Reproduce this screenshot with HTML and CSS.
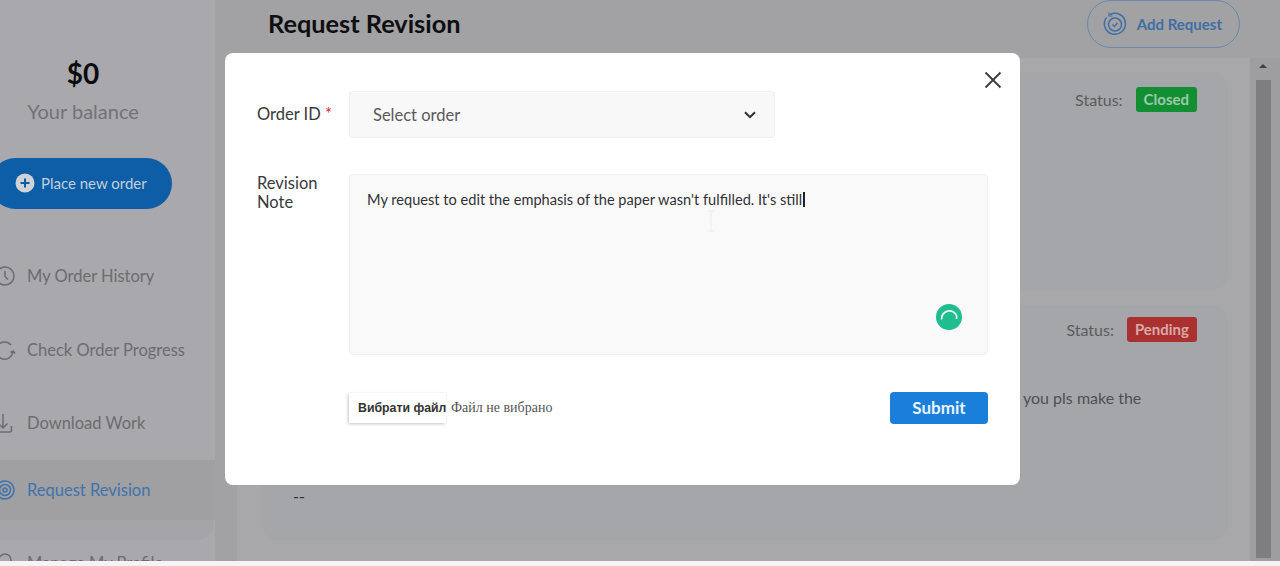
FILE: index.html
```html
<!DOCTYPE html>
<html lang="en">
<head>
    <meta charset="UTF-8">
    <meta name="viewport" content="width=device-width, initial-scale=1.0">
    <title>Request Revision</title>
    <link rel="stylesheet" href="styles.css">
</head>
<body>
    <div class="page">
        <aside class="sidebar">
            <div class="balance">$0</div>
            <div class="balance-label">Your balance</div>
            <a class="place-order">
                <svg class="plus-icon" viewBox="0 0 20 20" width="20" height="20"><circle cx="10" cy="10" r="9.5" fill="#cfd3d8"/><path d="M10 5.5v9M5.5 10h9" stroke="#0d5ea6" stroke-width="2"/></svg>
                Place new order
            </a>
            <nav class="nav">
                <a class="nav-item">
                    <svg viewBox="0 0 22 22" width="22" height="22" fill="none" stroke="currentColor" stroke-width="1.5"><circle cx="11" cy="11" r="9"/><path d="M11 6v5.5l3 3"/></svg>
                    My Order History
                </a>
                <a class="nav-item">
                    <svg viewBox="0 0 22 22" width="22" height="22" fill="none" stroke="currentColor" stroke-width="1.5"><path d="M17 6a8.5 8.5 0 1 0 2 7"/><path d="M16.5 13.5l2.7-1.5 1.8 2.5"/></svg>
                    Check Order Progress
                </a>
                <a class="nav-item">
                    <svg viewBox="0 0 22 22" width="22" height="22" fill="none" stroke="currentColor" stroke-width="1.5"><path d="M9 2v14M4.5 11.5L9 16l4.5-4.5M1 20h14.5q2 0 2-2v-4"/></svg>
                    Download Work
                </a>
                <a class="nav-item active">
                    <svg viewBox="0 0 22 22" width="22" height="22" fill="none" stroke="currentColor" stroke-width="1.5"><circle cx="11" cy="11" r="9"/><circle cx="11" cy="11" r="5.5"/><circle cx="11" cy="11" r="2"/></svg>
                    Request Revision
                </a>
                <a class="nav-item">
                    <svg viewBox="0 0 22 22" width="22" height="22" fill="none" stroke="currentColor" stroke-width="1.5"><circle cx="11" cy="8" r="6"/></svg>
                    Manage My Profile
                </a>
            </nav>
        </aside>

        <main class="main">
            <header class="main-header">
                <h1>Request Revision</h1>
                <a class="add-request">
                    <svg viewBox="0 0 26 26" width="26" height="26" fill="none" stroke="currentColor" stroke-width="1.5"><path d="M8 3.5a10.5 10.5 0 1 1-3.5 3"/><circle cx="13" cy="13.5" r="6.5"/><path d="M10.5 13.5l2 2 3-3.5"/><path d="M7 1.5v3.5h3.5" stroke-width="1.2"/></svg>
                    Add Request
                </a>
            </header>
            <div class="panel">
                <div class="list">
                    <section class="card card-first">
                        <div class="status-row">
                            <span>Status:</span>
                            <span class="badge badge-closed">Closed</span>
                        </div>
                    </section>
                    <section class="card card-second">
                        <div class="status-row">
                            <span>Status:</span>
                            <span class="badge badge-pending">Pending</span>
                        </div>
                        <p class="card-note">you pls make the</p>
                        <p class="card-reply">--</p>
                    </section>
                </div>
                <div class="scrollbar">
                    <span class="scroll-arrow"></span>
                    <span class="scroll-thumb"></span>
                </div>
            </div>
        </main>
    </div>

    <div class="modal">
        <button class="close" aria-label="Close">
            <svg viewBox="0 0 18 18" width="18" height="18" fill="none" stroke="#3a3a3c" stroke-width="1.8"><path d="M1.5 1.5l15 15M16.5 1.5l-15 15"/></svg>
        </button>
        <div class="form-row row-order">
            <label class="form-label">Order ID <span class="required">*</span></label>
            <div class="select">
                Select order
                <svg viewBox="0 0 12 8" width="12" height="8" fill="none" stroke="#2d2d30" stroke-width="2"><path d="M1 1.2l5 5 5-5"/></svg>
            </div>
        </div>
        <div class="form-row row-note">
            <label class="form-label">Revision Note</label>
            <div class="note">
                <span class="note-text">My request to edit the emphasis of the paper wasn't fulfilled. It's still</span><span class="caret"></span>
                <svg class="ibeam" viewBox="0 0 8 22" width="8" height="22" fill="none" stroke="#ecebee" stroke-width="1"><path d="M1 1h6M4 1v20M1 21h6"/></svg>
                <svg class="spinner" viewBox="0 0 26 26" width="26" height="26" fill="none"><circle cx="13" cy="13" r="13" fill="#1fbd90"/><path d="M5.6 15.5A7.800 7.800 0 0 1 20.700 12l-.2 3" stroke="#e8f7f2" stroke-width="1.800"/></svg>
            </div>
        </div>
        <div class="form-footer">
            <div class="file-input">
                <span class="file-button">Вибрати файл</span>
                <span class="file-name">Файл не вибрано</span>
            </div>
            <button class="submit">Submit</button>
        </div>
    </div>
</body>
</html>
```

FILE: styles.css
```css
* {
    box-sizing: border-box;
}
body {
    margin: 0;
    background-color: #f4f4f5;
    font-family: Lato, "Noto Sans", sans-serif;
    overflow: hidden;
}
.page {
    display: flex;
    height: 561px;
    overflow: hidden;
    background-color: #a2a1a3;
}

/* sidebar */
.sidebar {
    flex: 0 0 215px;
    padding-top: 56px;
    background-color: #a9a8ac;
    display: flex;
    flex-direction: column;
}
.balance {
    flex: none;
    text-align: center;
    width: 166px;
    font-size: 28px;
    line-height: 34px;
    font-weight: 700;
    color: #0c0c0e;
}
.balance-label {
    flex: none;
    width: 166px;
    margin-top: 9px;
    text-align: center;
    font-size: 20px;
    line-height: 24px;
    color: #737276;
}
.place-order {
    flex: none;
    display: flex;
    align-items: center;
    gap: 6px;
    width: 182px;
    height: 51px;
    margin: 35px 0 0 -10px;
    padding: 0 0 2px 25px;
    border-radius: 26px;
    background-color: #0d5ea6;
    color: #c3cfdc;
    font-size: 15px;
}
.nav {
    flex: none;
    display: flex;
    flex-direction: column;
    gap: 13.5px;
    margin-top: 37px;
}
.nav-item {
    position: relative;
    display: flex;
    align-items: center;
    gap: 11px;
    flex: 0 0 60px;
    margin-left: -6px;
    font-size: 16.5px;
    color: #6d6c70;
}
.nav-item.active {
    margin-top: -7px;
    margin-left: 0;
    background-color: #a09fa2;
    color: #3f73ad;
}
.nav-item.active svg {
    margin-left: -6px;
}
.nav-item.active::after {
    content: "";
    position: absolute;
    left: 0;
    right: 2px;
    top: 60px;
    height: 20px;
    border-bottom-right-radius: 16px;
    background-color: #a5a4a8;
}

/* main */
.main {
    flex: 1;
    min-width: 0;
    display: flex;
    flex-direction: column;
}
.main-header {
    flex: 0 0 58px;
    display: flex;
    justify-content: space-between;
    padding: 0 40px 0 53px;
}
.main-header h1 {
    margin: 7px 0 0;
    font-size: 25.3px;
    line-height: 32px;
    font-weight: 700;
    color: #0e0e10;
}
.add-request {
    display: flex;
    align-items: center;
    gap: 9px;
    height: 48px;
    padding: 0 17px 0 14px;
    border: 1.5px solid #6888ad;
    border-radius: 24px;
    color: #3f6fa5;
    font-size: 15px;
    font-weight: 700;
}
.panel {
    flex: 1;
    margin-left: 22px;
    display: flex;
    min-height: 0;
    background-color: #a8a8aa;
}
.list {
    flex: 1;
    padding: 14px 22px 0 25px;
    display: flex;
    flex-direction: column;
    gap: 15px;
}
.card {
    flex: none;
    border: 1px solid #a5a6a9;
    border-radius: 16px;
    background-color: #a4a6a9;
    padding: 14px 30px 0;
    color: #5c5c60;
}
.card-first {
    height: 218px;
}
.card-second {
    height: 235px;
    padding-top: 11px;
}
.status-row {
    display: flex;
    justify-content: flex-end;
    align-items: center;
    gap: 13px;
    font-size: 16px;
}
.badge {
    padding: 0 8px;
    height: 25px;
    line-height: 25px;
    font-size: 15px;
    border-radius: 3px;
    font-weight: 700;
}
.badge-closed {
    background-color: #118f32;
    color: #9fc9ab;
}
.badge-pending {
    background-color: #ab3030;
    color: #d9a9a9;
}
.card-note {
    margin: 46px 0 0 730px;
    font-size: 16px;
    line-height: 20px;
    color: #4f4f53;
}
.card-reply {
    margin: 78px 0 0;
    font-size: 16px;
    line-height: 20px;
    color: #2b2b2e;
}
.scrollbar {
    flex: 0 0 30px;
    display: flex;
    flex-direction: column;
    align-items: center;
    padding: 6px 4px 3px 0;
    background-color: #9e9da0;
}
.scroll-arrow {
    width: 0;
    height: 0;
    border: 4px solid transparent;
    border-bottom: 4px solid #3f3f42;
    border-top: 0;
}
.scroll-thumb {
    flex: 1;
    width: 15px;
    margin-top: 12px;
    background-color: #807d81;
}

/* modal */
.modal {
    position: absolute;
    left: 225px;
    top: 53px;
    width: 795px;
    height: 432px;
    border-radius: 8px;
    background-color: #fff;
    padding: 38px 32px 0;
}
.close {
    position: absolute;
    top: 18px;
    right: 18px;
    padding: 0;
    border: none;
    background: none;
    line-height: 0;
}
.form-row {
    display: flex;
}
.row-order {
    width: 518px;
}
.row-note {
    margin-top: 36px;
}
.form-label {
    flex: 0 0 92px;
    padding-right: 20px;
    font-size: 16.5px;
    line-height: 19px;
    color: #39393c;
}
.row-order .form-label {
    align-self: center;
    padding-right: 0;
    white-space: nowrap;
}
.required {
    color: #e0283a;
}
.select {
    flex: 1;
    height: 47px;
    display: flex;
    align-items: center;
    justify-content: space-between;
    padding: 0 18px 0 23px;
    border: 1px solid #f1f1f3;
    border-radius: 3px;
    background-color: #f8f8f9;
    font-size: 16.5px;
    color: #5a5a5e;
}
.note {
    position: relative;
    flex: 1;
    height: 181px;
    padding: 16px 17px;
    border: 1px solid #f1f1f3;
    border-radius: 4px;
    background-color: #f9f9fa;
    font-size: 14.6px;
    line-height: 18px;
    color: #323235;
}
.caret {
    display: inline-block;
    width: 2px;
    height: 15px;
    margin-left: 1px;
    vertical-align: -2px;
    background-color: #222;
}
.ibeam {
    position: absolute;
    left: 357px;
    top: 35px;
}
.spinner {
    position: absolute;
    right: 25px;
    bottom: 24px;
}
.form-footer {
    display: flex;
    justify-content: space-between;
    align-items: center;
    margin: 37px 0 0 92px;
}
.file-input {
    display: flex;
    align-items: center;
    gap: 5px;
}
.file-button {
    flex: none;
    height: 30px;
    width: 97px;
    padding-left: 9px;
    line-height: 30px;
    white-space: nowrap;
    font-family: "Liberation Sans", Arial, sans-serif;
    font-size: 12.3px;
    font-weight: 700;
    color: #333;
    background-color: #fff;
    box-shadow: -1px 1px 3px rgba(0,0,0,0.22);
}
.file-name {
    font-family: "Liberation Serif", serif;
    font-size: 14px;
    color: #555;
}
.submit {
    width: 98px;
    height: 32px;
    padding: 0 0 2px;
    border: none;
    border-radius: 4px;
    background-color: #1a7edb;
    color: #eaf3fc;
    font-family: inherit;
    font-size: 17px;
    font-weight: 700;
}
```
